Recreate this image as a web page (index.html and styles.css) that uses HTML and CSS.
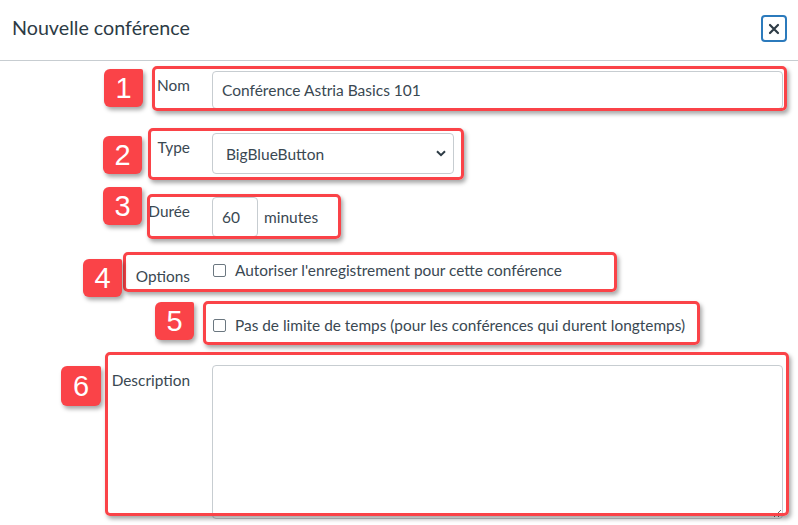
FILE: index.html
```html
<!DOCTYPE html>
<html lang="fr">
<head>
    <meta charset="UTF-8">
    <meta name="viewport" content="width=device-width, initial-scale=1.0">
    <title>Nouvelle conférence</title>
    <link rel="stylesheet" href="styles.css">
</head>
<body>
    <div class="dialog">
        <header class="dialog-header">
            <h1>Nouvelle conférence</h1>
            <button type="button" class="close" aria-label="Fermer">
                <svg width="12" height="12" viewBox="0 0 12 12">
                    <path d="M2 2 L10 10 M10 2 L2 10" stroke="#2d3b45" stroke-width="2.2" stroke-linecap="round"/>
                </svg>
            </button>
        </header>

        <form class="dialog-body">
            <!-- 1. Nom -->
            <div class="row row-name">
                <label for="nom">Nom</label>
                <div class="control">
                    <input type="text" id="nom" class="text-input" value="Conférence Astria Basics 101">
                </div>
                <span class="mark mark-1"></span>
                <span class="badge badge-1">1</span>
            </div>

            <!-- 2. Type -->
            <div class="row row-type">
                <label for="type">Type</label>
                <div class="control">
                    <div class="select-wrap">
                        <select id="type">
                            <option>BigBlueButton</option>
                        </select>
                        <svg class="chevron" width="10" height="7" viewBox="0 0 10 7">
                            <path d="M1 1.2 L5 5.2 L9 1.2" fill="none" stroke="#2d3b45" stroke-width="2"/>
                        </svg>
                    </div>
                </div>
                <span class="mark mark-2"></span>
                <span class="badge badge-2">2</span>
            </div>

            <!-- 3. Durée -->
            <div class="row row-duration">
                <label for="duree">Durée</label>
                <div class="control duration">
                    <input type="text" id="duree" class="text-input small" value="60">
                    <span>minutes</span>
                </div>
                <span class="mark mark-3"></span>
                <span class="badge badge-3">3</span>
            </div>

            <!-- 4. Options -->
            <div class="row row-options">
                <label>Options</label>
                <div class="control">
                    <label class="check"><input type="checkbox"> Autoriser l'enregistrement pour cette conférence</label>
                </div>
                <span class="mark mark-4"></span>
                <span class="badge badge-4">4</span>
            </div>

            <!-- 5. Pas de limite -->
            <div class="row row-limit">
                <span></span>
                <div class="control">
                    <label class="check"><input type="checkbox"> Pas de limite de temps (pour les conférences qui durent longtemps)</label>
                </div>
                <span class="mark mark-5"></span>
                <span class="badge badge-5">5</span>
            </div>

            <!-- 6. Description -->
            <div class="row row-description">
                <label for="description">Description</label>
                <div class="control">
                    <textarea id="description"></textarea>
                </div>
                <span class="mark mark-6"></span>
                <span class="badge badge-6">6</span>
            </div>
        </form>
    </div>
</body>
</html>
```

FILE: styles.css
```css
body {
    margin: 0;
    padding: 0;
    background-color: #fff;
    font-family: Lato, "Noto Sans", sans-serif;
    color: #3a4852;
    overflow: hidden;
}
.dialog {
    width: 798px;
    height: 525px;
}
.dialog-header {
    display: flex;
    justify-content: space-between;
    align-items: flex-start;
    height: 61px;
    box-sizing: border-box;
    padding: 15px 11px 0 12px;
    border-bottom: 1px solid #c7cdd1;
}
.dialog-header h1 {
    margin: 0;
    font-size: 19.7px;
    font-weight: normal;
    line-height: 26px;
    color: #2d3b45;
}
.close {
    display: flex;
    align-items: center;
    justify-content: center;
    width: 26px;
    height: 27px;
    padding: 0;
    background: #fff;
    border: 2px solid #2b7abc;
    border-radius: 4px;
}
.dialog-body {
    padding: 10px 15px 0 0;
}
.row {
    position: relative;
    display: grid;
    grid-template-columns: 190px 1fr;
    column-gap: 22px;
    align-items: start;
}
.row > label {
    font-size: 15.4px;
    line-height: 20px;
    text-align: right;
    padding-top: 4px;
}
.row-name { margin-bottom: 24px; }
.row-type { margin-bottom: 23px; }
.row-duration { margin-bottom: 23px; }
.row-options { margin-bottom: 29px; }
.row-options > label { padding-top: 6px; }
.row-limit { margin-bottom: 30px; }
.row-description > label { padding-top: 5px; }

.text-input,
select,
textarea {
    box-sizing: border-box;
    font-family: inherit;
    font-size: 15.5px;
    color: #3a4852;
    background: #fff;
    border: 1px solid #c7cdd1;
    border-radius: 4px;
    outline: none;
}
.text-input {
    display: block;
    width: 100%;
    height: 38px;
    padding: 0 9px;
}
.select-wrap {
    position: relative;
    width: 242px;
}
select {
    appearance: none;
    width: 100%;
    height: 41px;
    padding: 0 13px;
}
.chevron {
    position: absolute;
    right: 8px;
    top: 17px;
}
.duration {
    display: flex;
    align-items: center;
    gap: 6px;
    font-size: 15.5px;
}
.text-input.small {
    width: 46px;
    height: 40px;
}
.check {
    display: flex;
    align-items: center;
    font-size: 15.4px;
    line-height: 20px;
}
.check input {
    appearance: none;
    width: 13px;
    height: 13px;
    margin: 0 9px 0 1px;
    border: 1px solid #6b7780;
    border-radius: 2px;
    background: #fff;
}
textarea {
    display: block;
    width: 100%;
    height: 154px;
    resize: both;
}

/* annotations */
.mark {
    position: absolute;
    box-sizing: border-box;
    border: 3px solid #fa4348;
    border-radius: 5px;
    box-shadow: 2px 3px 4px rgba(0,0,0,0.35);
    pointer-events: none;
}
.badge {
    position: absolute;
    width: 39px;
    height: 38px;
    display: flex;
    align-items: center;
    justify-content: center;
    background-color: #fa4348;
    color: #fff;
    font-family: "Liberation Sans", Arial, sans-serif;
    font-size: 29px;
    border-radius: 6px 2px 6px 6px;
    box-shadow: 2px 3px 4px rgba(0,0,0,0.35);
}
.mark-1 { left: 152px; top: -5px; width: 635px; height: 45px; }
.badge-1 { left: 104px; top: -2px; }
.mark-2 { left: 148px; top: -5px; width: 316px; height: 52px; }
.badge-2 { left: 103px; top: 3px; }
.mark-3 { left: 147px; top: -3px; width: 194px; height: 45px; }
.badge-3 { left: 103px; top: -10px; }
.mark-4 { left: 123px; top: -8px; width: 494px; height: 40px; }
.badge-4 { left: 83px; top: -1px; }
.mark-5 { left: 203px; top: -14px; width: 497px; height: 44px; }
.badge-5 { left: 155px; top: -13px; }
.mark-6 { left: 105px; top: -13px; width: 684px; height: 164px; }
.badge-6 { left: 61px; top: 1px; width: 40px; height: 40px; }
```
